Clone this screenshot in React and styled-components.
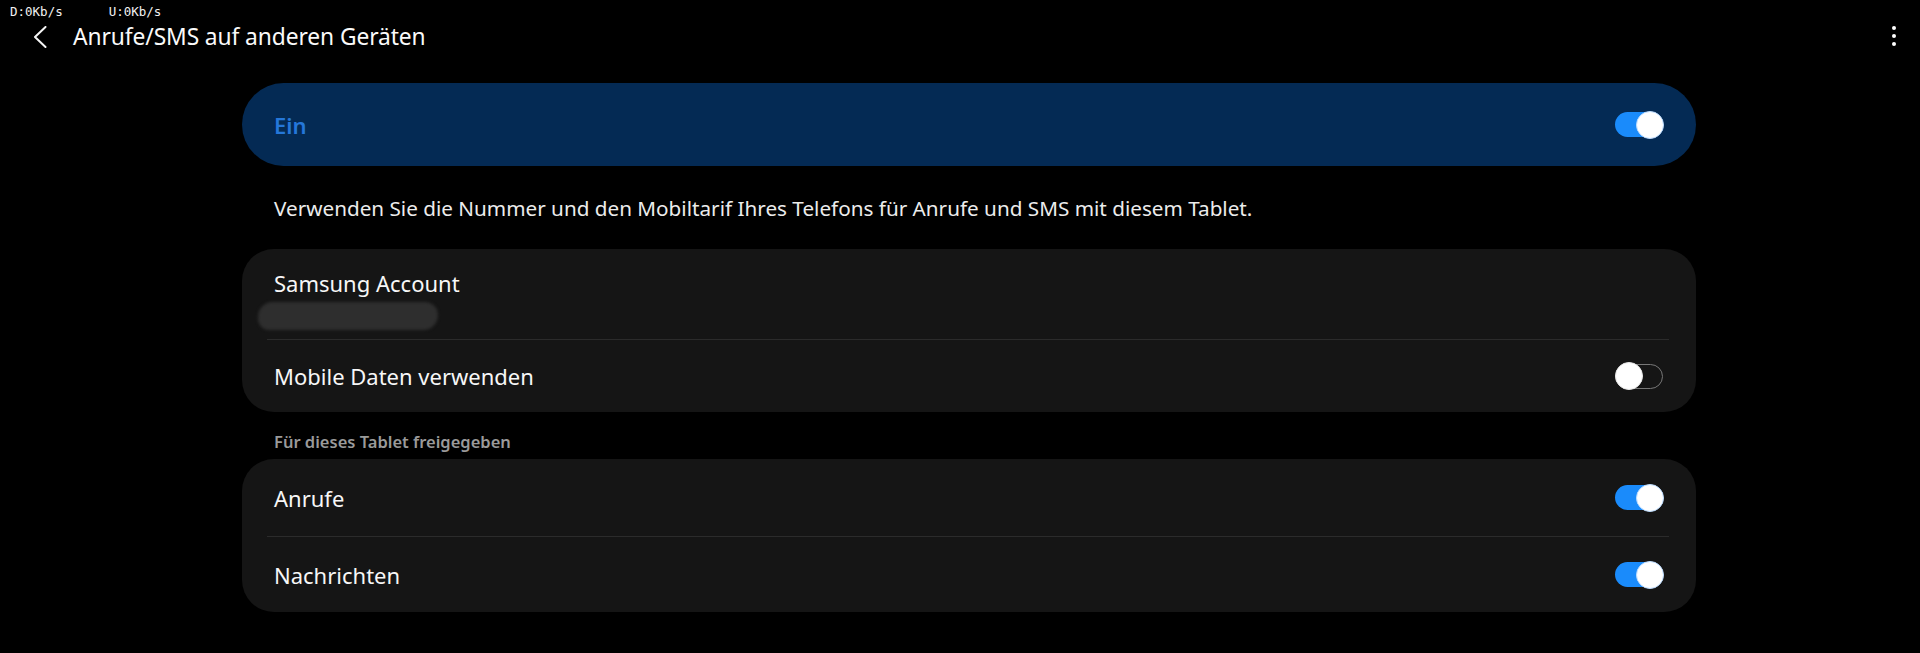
import React, { useState } from 'react'
import styled, { createGlobalStyle } from 'styled-components'

const GlobalStyle = createGlobalStyle`
  body {
    margin: 0;
    background: #000;
    font-family: "Noto Sans", "Liberation Sans", sans-serif;
  }
`

const Page = styled.div`
  min-height: 653px;
  background: #000;
  color: #fafafa;
`

const StatusBar = styled.div`
  height: 20px;
  display: flex;
  gap: 46px;
  padding-left: 10px;
  font-family: "DejaVu Sans Mono", "Liberation Mono", monospace;
  font-size: 12.5px;
  line-height: 14px;
  padding-top: 5px;
  box-sizing: border-box;
  color: #f2f2f2;
`

const Header = styled.div`
  height: 34px;
  display: flex;
  align-items: center;
  padding: 0 24px 0 33px;
`

const BackButton = styled.div`
  width: 16px;
  height: 24px;
  display: flex;
  align-items: center;
  margin-right: 24px;
`

const Title = styled.div`
  flex: 1;
  font-size: 22.8px;
  line-height: 30px;
  color: #fafafa;
  letter-spacing: -0.1px;
`

const More = styled.div`
  display: flex;
  flex-direction: column;
  gap: 4px;
  margin-top: -2px;
  span {
    width: 4px;
    height: 4px;
    border-radius: 50%;
    background: #fff;
  }
`

const Content = styled.div`
  width: 1454px;
  margin: 29px 0 0 242px;
  display: flex;
  flex-direction: column;
`

const MasterPanel = styled.div`
  height: 83px;
  border-radius: 42px;
  background: #042a54;
  display: flex;
  align-items: center;
  justify-content: space-between;
  padding: 0 33px 0 32px;
`

const MasterLabel = styled.div`
  font-size: 22px;
  font-weight: 600;
  color: #2577d9;
`

const Description = styled.div`
  margin: 28px 0 27px 32px;
  font-size: 20.7px;
  line-height: 28px;
  color: #ececec;
`

const Card = styled.div`
  background: #151515;
  border-radius: 32px;
  display: flex;
  flex-direction: column;
`

const Row = styled.div`
  height: ${p => p.h}px;
  display: flex;
  align-items: center;
  justify-content: space-between;
  padding: 0 33px 0 32px;
`

const AccountRow = styled.div`
  height: 90px;
  display: flex;
  flex-direction: column;
  padding: 19px 32px 0;
  box-sizing: border-box;
`

const Label = styled.div`
  font-size: 22px;
  line-height: 30px;
  color: #f7f7f7;
`

const Redacted = styled.div`
  width: 180px;
  height: 28px;
  margin: 4px 0 0 -16px;
  border-radius: 16px 14px 16px 12px;
  background: #2e2e2e;
  filter: blur(1.5px);
`

const Divider = styled.div`
  height: 1px;
  margin: 0 27px 0 25px;
  background: #2b2b2b;
`

const SectionTitle = styled.div`
  margin: 18px 0 5px 32px;
  font-size: 16.5px;
  line-height: 24px;
  font-weight: 600;
  color: #9a9a9a;
`

const Track = styled.div`
  position: relative;
  width: 48px;
  height: 25px;
  border-radius: 13px;
  box-sizing: border-box;
  background: ${p => (p.on ? '#1a8bfb' : 'transparent')};
  border: ${p => (p.on ? 'none' : '1.5px solid #777')};
  cursor: pointer;
`

const Thumb = styled.div`
  position: absolute;
  top: 50%;
  ${p => (p.on ? 'right: -1px;' : 'left: -1px;')}
  width: 28px;
  height: 28px;
  margin-top: -14px;
  border-radius: 50%;
  background: #fff;
  box-sizing: border-box;
  border: 1.5px solid ${p => (p.on ? '#bcdcff' : '#e8e8e8')};
`

const Toggle = ({ initial }) => {
  const [on, setOn] = useState(initial)
  return (
    <Track on={on ? 1 : 0} onClick={() => setOn(!on)}>
      <Thumb on={on ? 1 : 0} />
    </Track>
  )
}

const App = () => {
  return (
    <Page>
      <GlobalStyle />
      <StatusBar>
        <span>D:0Kb/s</span>
        <span>U:0Kb/s</span>
      </StatusBar>
      <Header>
        <BackButton>
          <svg width="14" height="22" viewBox="0 0 14 22">
            <path d="M12.5 1 L2 11 L12.5 21" fill="none" stroke="#f5f5f5" strokeWidth="2" strokeLinecap="round" strokeLinejoin="round" />
          </svg>
        </BackButton>
        <Title>Anrufe/SMS auf anderen Geräten</Title>
        <More>
          <span />
          <span />
          <span />
        </More>
      </Header>

      <Content>
        <MasterPanel>
          <MasterLabel>Ein</MasterLabel>
          <Toggle initial={true} />
        </MasterPanel>

        <Description>
          Verwenden Sie die Nummer und den Mobiltarif Ihres Telefons für Anrufe und SMS mit diesem Tablet.
        </Description>

        <Card>
          <AccountRow>
            <Label>Samsung Account</Label>
            <Redacted />
          </AccountRow>
          <Divider />
          <Row h={72}>
            <Label>Mobile Daten verwenden</Label>
            <Toggle initial={false} />
          </Row>
        </Card>

        <SectionTitle>Für dieses Tablet freigegeben</SectionTitle>

        <Card>
          <Row h={77}>
            <Label>Anrufe</Label>
            <Toggle initial={true} />
          </Row>
          <Divider />
          <Row h={75}>
            <Label>Nachrichten</Label>
            <Toggle initial={true} />
          </Row>
        </Card>
      </Content>
    </Page>
  )
}

export default App
